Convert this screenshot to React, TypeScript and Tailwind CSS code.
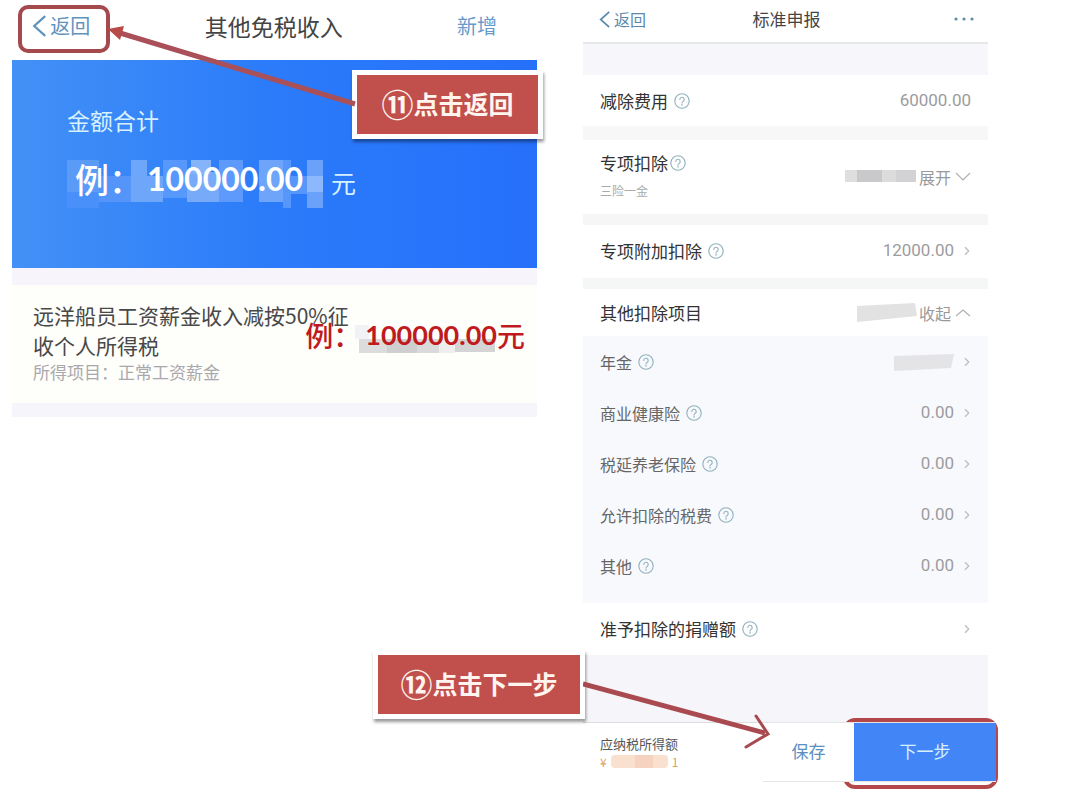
import React from "react";
import { ChevronRight } from "lucide-react";

type Block = { x: number; y: number; w: number; h: number; fill: string };

const AMOUNT_BLOCKS: Block[] = [
  { x: 0, y: 0, w: 32, h: 32, fill: "#5b9bf8" },
  { x: 0, y: 32, w: 32, h: 16, fill: "#4a90fa" },
  { x: 32, y: 16, w: 32, h: 26, fill: "#5595fa" },
  { x: 64, y: 0, w: 16, h: 42, fill: "#6ea6fa" },
  { x: 80, y: 16, w: 16, h: 26, fill: "#6ea6fa" },
  { x: 96, y: 0, w: 24, h: 38, fill: "#5698fb" },
  { x: 120, y: 12, w: 32, h: 30, fill: "#77abfa" },
  { x: 124, y: 0, w: 20, h: 14, fill: "#86b4fa" },
  { x: 152, y: 0, w: 24, h: 42, fill: "#5d9afb" },
  { x: 192, y: 0, w: 24, h: 42, fill: "#6ea5fb" },
  { x: 216, y: 0, w: 8, h: 48, fill: "#5796fb" },
  { x: 224, y: 16, w: 16, h: 18, fill: "#5796fb" },
  { x: 240, y: 0, w: 16, h: 48, fill: "#6aa2fb" },
  { x: 240, y: 16, w: 16, h: 16, fill: "#8db8fb" },
];

const ITEM_BLOCKS: Block[] = [
  { x: 0, y: 0, w: 14, h: 14, fill: "#f1f2f6" },
  { x: 4, y: 14, w: 28, h: 14, fill: "#dcdcdc" },
  { x: 32, y: 14, w: 30, h: 14, fill: "#cfcfcf" },
  { x: 62, y: 14, w: 22, h: 14, fill: "#dadada" },
  { x: 84, y: 14, w: 16, h: 14, fill: "#eeeeee" },
  { x: 100, y: 14, w: 40, h: 13, fill: "#d4d4d4" },
];

const SUB_ITEMS = [
  { label: "年金", value: "" },
  { label: "商业健康险", value: "0.00" },
  { label: "税延养老保险", value: "0.00" },
  { label: "允许扣除的税费", value: "0.00" },
  { label: "其他", value: "0.00" },
];

const Mosaic = ({ blocks, className }: { blocks: Block[]; className: string }) => (
  <svg className={className} aria-hidden="true">
    {blocks.map((b, i) => (
      <rect key={i} x={b.x} y={b.y} width={b.w} height={b.h} fill={b.fill} />
    ))}
  </svg>
);

const Help = () => (
  <button type="button" aria-label="帮助" className="shrink-0">
    <svg width="16" height="16" viewBox="0 0 16 16" fill="none" stroke="#8fb0bd" strokeWidth="1.1">
      <circle cx="8" cy="8" r="7.2" />
      <path d="M5.8 6.5a2.2 2.2 0 1 1 3.3 1.9c-.8.5-1.1.8-1.1 1.6M8 11.2v1" strokeLinecap="round" />
    </svg>
  </button>
);

const Arrow = () => <ChevronRight size={14} strokeWidth={2} className="text-[#b9bdc2]" />;

const Back = ({ size }: { size: number }) => (
  <svg width={size * 0.65} height={size} viewBox="0 0 13 20" fill="none" stroke="currentColor" strokeWidth="2">
    <path d="M12 1 L2 10 L12 19" />
  </svg>
);

const Fold = ({ open }: { open?: boolean }) => (
  <svg width="16" height="10" fill="none" stroke="#b0b0b2" strokeWidth="1.2" aria-hidden="true">
    <path d={open ? "M1 8 L8 2 L15 8" : "M1 1 L8 8 L15 1"} />
  </svg>
);

const Amount = ({ children }: { children: React.ReactNode }) => (
  <span className="font-['Roboto',sans-serif] text-[17px] text-[#9c9c9e]">{children}</span>
);

const Callout = ({ num, text, className }: { num: string; text: string; className: string }) => (
  <div className={`absolute z-20 bg-white p-[5px] shadow-[1px_3px_3px_rgba(0,0,0,0.4)] ${className}`}>
    <div className="flex h-[59px] items-center justify-center bg-[#c14f4c] pb-[3px] font-bold text-[#fff4ee]">
      <span className="text-[32px] leading-8">{num}</span>
      <span className="text-[25px] leading-8">{text}</span>
    </div>
  </div>
);

const IncomePanel = () => (
  <section className="relative">
    <header className="relative flex h-[60px] items-center justify-between pr-10 pb-2 pl-5">
      <a href="#back" className="flex items-center gap-1 text-[20px] text-[#5f93bd]">
        <Back size={22} />
        返回
      </a>
      <h1 className="text-[23px] text-[#444]">其他免税收入</h1>
      <a href="#add" className="text-[20px] text-[#6699cc]">
        新增
      </a>
      <div className="absolute top-[5px] left-[6px] h-12 w-[92px] rounded-[10px] border-4 border-[#a4494c]" />
    </header>

    <div className="h-[208px] bg-linear-to-r from-[#4390f6] via-[#2b7bfa] to-[#2670fa] pt-[42px] pl-[55px] text-[#d6f1ff]">
      <p className="text-[23px] leading-9">金额合计</p>
      <div className="relative mt-3 flex h-[58px] items-center">
        <Mosaic blocks={AMOUNT_BLOCKS} className="absolute top-[10px] left-0 h-12 w-64" />
        <p className="relative flex items-center pl-2 text-white">
          <span className="text-[34px] leading-10 font-medium">例：</span>
          <span className="pl-1 font-['Lato',sans-serif] text-[32px] leading-10 font-bold">100000.00</span>
        </p>
        <span className="relative pt-2 pl-7 text-[25px]">元</span>
      </div>
    </div>

    <div className="h-[17px] bg-[#f7f5fb]" />
    <div className="relative h-[118px] bg-[#fefefb] pt-[15px] pl-[21px]">
      <p className="w-[330px] text-[21px] leading-[30px] text-[#484848]">
        远洋船员工资薪金收入减按50%征收个人所得税
      </p>
      <p className="text-[17px] leading-6 text-[#aaa8ad]">所得项目：正常工资薪金</p>
      <div className="absolute top-[30px] right-3 flex items-center text-[#c01a1d]">
        <Mosaic blocks={ITEM_BLOCKS} className="absolute top-[10px] left-[50px] h-7 w-36" />
        <span className="relative text-[28px] leading-10 font-medium">例：</span>
        <span className="relative pl-1 font-['Lato',sans-serif] text-[27px] leading-10 font-bold">100000.00</span>
        <span className="relative text-[28px] leading-10 font-medium">元</span>
      </div>
    </div>
    <div className="h-[14px] bg-[#f7f5fc]" />

    <Callout num="⑪" text="点击返回" className="top-[70px] left-[340px] w-[191px]" />
    <svg className="absolute top-0 left-0 z-30 h-40 w-[360px]" aria-hidden="true">
      <path d="M343 104 L108 33" stroke="#a95058" strokeWidth="5" />
      <path d="M96 29 L112 26 L108 40 Z" fill="#b84a4a" />
    </svg>
  </section>
);

const DeclarePanel = () => (
  <section className="relative">
    <header className="grid h-11 grid-cols-3 items-center border-b-2 border-[#e6e9ea] pr-[14px] pb-1 pl-4">
      <a href="#back" className="flex items-center gap-1 text-[16px] text-[#5c89ab]">
        <Back size={17} />
        返回
      </a>
      <h1 className="text-center text-[17px] text-[#444]">标准申报</h1>
      <button type="button" aria-label="更多" className="justify-self-end">
        <svg width="20" height="4" fill="#5f8aa8">
          <circle cx="2" cy="2" r="1.6" />
          <circle cx="10" cy="2" r="1.6" />
          <circle cx="18" cy="2" r="1.6" />
        </svg>
      </button>
    </header>

    <div className="h-[31px] bg-[#f7f7fb]" />
    <div className="flex h-[51px] items-center justify-between px-[17px]">
      <span className="flex items-center gap-1.5 text-[17px] text-[#333]">
        减除费用 <Help />
      </span>
      <Amount>60000.00</Amount>
    </div>

    <div className="h-[14px] bg-[#f7f7f8]" />
    <div className="flex h-[74px] items-center justify-between px-[17px]">
      <div>
        <p className="flex items-center gap-0.5 text-[17px] leading-6 text-[#333]">
          专项扣除 <Help />
        </p>
        <p className="pt-1 text-[12px] leading-6 text-[#aaa]">三险一金</p>
      </div>
      <button type="button" className="flex items-center text-[16px] text-[#999]">
        <svg width="74" height="14" aria-hidden="true">
          <rect width="14" height="12" fill="#dedede" />
          <rect x="12" width="25" height="12" fill="#c9c9cb" />
          <rect x="37" width="14" height="12" fill="#dcdcdc" />
          <rect x="51" width="20" height="12" fill="#d2d2d4" />
        </svg>
        <span className="pr-1">展开</span>
        <Fold />
      </button>
    </div>

    <div className="h-[11px] bg-[#f6f6f7]" />
    <div className="flex h-[53px] items-center justify-between pr-[14px] pb-0.5 pl-[17px]">
      <span className="flex items-center gap-1.5 text-[17px] text-[#333]">
        专项附加扣除 <Help />
      </span>
      <span className="flex items-center gap-1.5">
        <Amount>12000.00</Amount>
        <Arrow />
      </span>
    </div>

    <div className="h-[11px] bg-[#f5f6f6]" />
    <div className="flex h-[47px] items-center justify-between px-[17px]">
      <span className="text-[17px] text-[#333]">其他扣除项目</span>
      <button type="button" className="flex items-center text-[16px] text-[#999]">
        <svg width="62" height="20" aria-hidden="true">
          <path d="M0 3 L58 0 L60 13 L0 19 Z" fill="#e2e2e3" />
        </svg>
        <span className="pr-1">收起</span>
        <Fold open />
      </button>
    </div>

    <div className="bg-[#f8f9fd] pb-3">
      {SUB_ITEMS.map((item) => (
        <div key={item.label} className="flex h-[51px] items-center justify-between pr-[14px] pl-[17px]">
          <span className="flex items-center gap-1.5 text-[16px] text-[#666]">
            {item.label} <Help />
          </span>
          <span className="flex items-center gap-1.5">
            {item.value ? (
              <Amount>{item.value}</Amount>
            ) : (
              <svg width="60" height="18" aria-hidden="true">
                <path d="M0 3 L60 1 L57 15 L0 18 Z" fill="#e4e4e7" />
              </svg>
            )}
            <Arrow />
          </span>
        </div>
      ))}
    </div>

    <div className="flex h-[52px] items-center justify-between pr-[14px] pl-[17px]">
      <span className="flex items-center gap-1.5 text-[17px] text-[#333]">
        准予扣除的捐赠额 <Help />
      </span>
      <Arrow />
    </div>
    <div className="h-[67px] bg-[#f6f5f9]" />

    <footer className="relative flex h-[60px] justify-between">
      <div className="w-[180px] border-t border-[#ddd] pt-[11px] pl-[17px]">
        <p className="text-[13px] leading-5 text-[#555]">应纳税所得额</p>
        <p className="flex items-center gap-1 text-[12px] leading-4 text-[#d9a469]">
          ¥
          <svg width="57" height="14" aria-hidden="true">
            <rect width="57" height="13" rx="4" fill="#f9e0cf" />
            <rect x="24" width="18" height="13" fill="#f5d3c0" />
          </svg>
          1
        </p>
      </div>
      <div className="absolute -top-1 -right-[10px] h-[71px] w-[155px] rounded-[12px] border-4 border-[#b4474a]" />
      <div className="relative -mr-2 flex w-[233px] border-y border-[#e6e6e6] bg-white text-[17px]">
        <button type="button" className="w-[91px] pb-0.5 text-[#5b8fc0]">
          保存
        </button>
        <button type="button" className="flex-1 bg-[#4285f6] pb-0.5 text-[#d9f0ff]">
          下一步
        </button>
      </div>
    </footer>

    <Callout num="⑫" text="点击下一步" className="top-[650px] -left-[210px] w-[212px]" />
    <svg className="absolute top-[670px] left-0 z-20 h-20 w-48" fill="none" stroke="#a84a50" aria-hidden="true">
      <path d="M0 14 L182 63" strokeWidth="5" />
      <path d="M173 46 L185 64 L163 77" strokeWidth="3" strokeLinecap="round" />
    </svg>
  </section>
);

export default function App() {
  return (
    <main className="grid grid-cols-[525fr_405fr] gap-x-[46px] bg-white pr-[92px] pb-[9px] pl-3 font-['Noto_Sans_CJK_SC',sans-serif]">
      <IncomePanel />
      <DeclarePanel />
    </main>
  );
}
